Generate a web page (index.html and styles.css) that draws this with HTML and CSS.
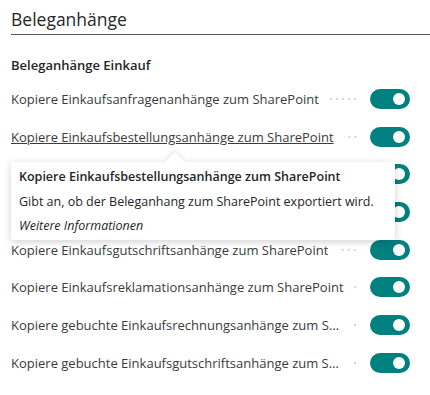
FILE: index.html
```html
<!DOCTYPE html>
<html lang="de">
<head>
  <meta charset="UTF-8">
  <title>Beleganhänge</title>
  <link rel="stylesheet" href="styles.css">
</head>
<body>
  <div class="page">
    <h2 class="caption">Beleganhänge</h2>

    <div class="group">
      <h3 class="group-title">Beleganhänge Einkauf</h3>

      <div class="rows">
        <div class="row">
          <span class="label">Kopiere Einkaufsanfragenanhänge zum SharePoint</span>
          <span class="leader"></span>
          <span class="toggle"></span>
        </div>
        <div class="row">
          <span class="label hover">Kopiere Einkaufsbestellungsanhänge zum SharePoint</span>
          <span class="leader"></span>
          <span class="toggle"></span>
        </div>
        <div class="row">
          <span class="label">Kopiere Einkaufsrechnungsanhänge zum SharePoint</span>
          <span class="leader"></span>
          <span class="toggle"></span>
        </div>
        <div class="row">
          <span class="label">Kopiere Einkaufslieferungsanhänge zum SharePoint</span>
          <span class="leader"></span>
          <span class="toggle"></span>
        </div>
        <div class="row">
          <span class="label">Kopiere Einkaufsgutschriftsanhänge zum SharePoint</span>
          <span class="leader"></span>
          <span class="toggle"></span>
        </div>
        <div class="row">
          <span class="label">Kopiere Einkaufsreklamationsanhänge zum SharePoint</span>
          <span class="leader"></span>
          <span class="toggle"></span>
        </div>
        <div class="row">
          <span class="label">Kopiere gebuchte Einkaufsrechnungsanhänge zum SharePoint</span>
          <span class="leader"></span>
          <span class="toggle"></span>
        </div>
        <div class="row">
          <span class="label">Kopiere gebuchte Einkaufsgutschriftsanhänge zum SharePoint</span>
          <span class="leader"></span>
          <span class="toggle"></span>
        </div>

        <!-- tooltip for the hovered field -->
        <div class="tooltip">
          <div class="tip-title">Kopiere Einkaufsbestellungsanhänge zum SharePoint</div>
          <div class="tip-text">Gibt an, ob der Beleganhang zum SharePoint exportiert wird.</div>
          <div class="tip-more">Weitere Informationen</div>
        </div>
      </div>
    </div>
  </div>
</body>
</html>
```

FILE: styles.css
```css
body {
  margin: 0;
  padding: 0;
  background-color: #fff;
  font-family: 'Open Sans', 'Noto Sans', sans-serif;
  color: #333;
}

.page {
  padding: 5px 0 0 11px;
}

.caption {
  margin: 0;
  font-size: 17.5px;
  font-weight: 400;
  color: #262626;
  line-height: 28px;
  padding-bottom: 1px;
  border-bottom: 1px solid #505c6d;
}

.group {
  padding-right: 20px;
}

.group-title {
  margin: 20px 0 0;
  font-size: 13px;
  font-weight: 600;
  color: #262626;
  line-height: 20px;
}

.rows {
  position: relative;
  margin-top: 5px;
}

.row {
  display: flex;
  align-items: center;
  height: 37.7px;
}

.label {
  font-size: 13px;
  color: #3b3b3b;
  white-space: nowrap;
  overflow: hidden;
  text-overflow: ellipsis;
  max-width: 333px;
}

.label.hover {
  text-decoration: underline;
}

.leader {
  flex: 1;
  height: 2px;
  margin: 0 12px 0 10px;
  background-image: radial-gradient(circle, #d6d6d6 1px, transparent 1.2px);
  background-size: 6px 2px;
  background-position: right center;
}

.toggle {
  position: relative;
  width: 40px;
  height: 20px;
  border-radius: 10px;
  background-color: #00807f;
  flex-shrink: 0;
}

.toggle::after {
  content: '';
  position: absolute;
  right: 5px;
  top: 4px;
  width: 12px;
  height: 12px;
  border-radius: 50%;
  background-color: #fff;
}

.tooltip {
  position: absolute;
  left: 0;
  top: 82px;
  width: 384px;
  box-sizing: border-box;
  padding: 4px 7px 4px 8px;
  background-color: #fff;
  border-radius: 2px;
  box-shadow: 0 2px 8px rgba(0, 0, 0, 0.18);
  font-size: 12.5px;
  color: #262626;
}

.tooltip::before {
  content: '';
  position: absolute;
  left: 157px;
  top: -7px;
  width: 14px;
  height: 14px;
  background-color: #fff;
  transform: rotate(45deg);
  box-shadow: -2px -2px 4px rgba(0, 0, 0, 0.08);
}

.tip-title {
  position: relative;
  font-weight: 600;
  line-height: 22px;
}

.tip-text {
  line-height: 28px;
}

.tip-more {
  font-style: italic;
  line-height: 20px;
}
```
